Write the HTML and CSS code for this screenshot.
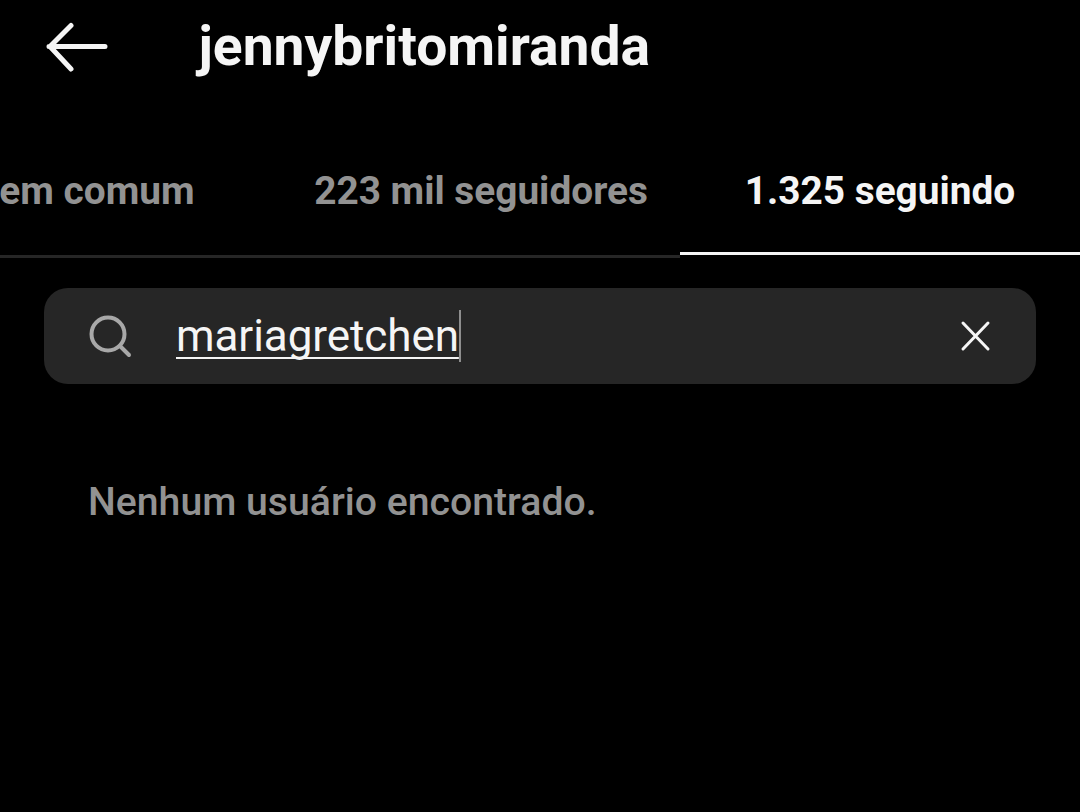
FILE: index.html
```html
<!DOCTYPE html>
<html lang="en">
<head>
    <meta charset="UTF-8">
    <meta name="viewport" content="width=device-width, initial-scale=1.0">
    <title>jennybritomiranda</title>
    <link rel="stylesheet" href="styles.css">
</head>
<body>
    <div class="page">
        <div class="header">
            <svg class="back-icon" width="62" height="50" viewBox="0 0 62 50" fill="none">
                <path d="M3 24.5H59M25 3.5L4 24.5L25 47" stroke="#f5f5f5" stroke-width="5" stroke-linecap="round" stroke-linejoin="round"/>
            </svg>
            <h1 class="username">jennybritomiranda</h1>
        </div>

        <div class="tabs">
            <a class="tab tab-common">em comum</a>
            <a class="tab tab-followers">223 mil seguidores</a>
            <a class="tab active">1.325 seguindo</a>
        </div>

        <div class="search">
            <svg class="search-icon" width="44" height="44" viewBox="0 0 44 44" fill="none">
                <circle cx="20" cy="20" r="16.5" stroke="#a8a8a8" stroke-width="4"/>
                <path d="M32 32L41 41" stroke="#a8a8a8" stroke-width="4" stroke-linecap="round"/>
            </svg>
            <div class="search-text"><span class="typed">mariagretchen</span><span class="caret"></span></div>
            <svg class="clear-icon" width="32" height="32" viewBox="0 0 32 32" fill="none">
                <path d="M4 3L29 29M29 3L4 29" stroke="#f5f5f5" stroke-width="3" stroke-linecap="round"/>
            </svg>
        </div>

        <p class="empty">Nenhum usuário encontrado.</p>
    </div>
</body>
</html>
```

FILE: styles.css
```css
* {
    box-sizing: border-box;
}
html, body {
    margin: 0;
    padding: 0;
    background-color: #000;
}
body {
    font-family: Roboto, "Liberation Sans", sans-serif;
    color: #f5f5f5;
}
.page {
    width: 1080px;
    height: 812px;
    overflow: hidden;
}
.header {
    display: flex;
    align-items: center;
    height: 94px;
    padding-left: 46px;
}
.back-icon {
    flex-shrink: 0;
}
.username {
    margin: -3px 0 0 90.5px;
    font-size: 55.2px;
    font-weight: 700;
    line-height: 94px;
    white-space: nowrap;
}
.tabs {
    display: flex;
    align-items: flex-start;
    height: 164px;
}
.tab {
    flex: none;
    display: flex;
    align-items: center;
    justify-content: center;
    width: 400px;
    height: 164px;
    padding-top: 32px;
    font-size: 38.8px;
    font-weight: 700;
    color: #929292;
    white-space: nowrap;
    border-bottom: 3px solid #262626;
}
.tab-common {
    margin-left: -120px;
    padding-left: 34px;
}
.tab-followers {
    padding-left: 2px;
}
.tab.active {
    height: 161px;
    padding-top: 35px;
    color: #f5f5f5;
    border-bottom-color: #f5f5f5;
}
.search {
    display: flex;
    align-items: center;
    height: 96px;
    margin: 30px 44px 0;
    padding: 0 46px 0 44px;
    background-color: #262626;
    border-radius: 24px;
}
.search-text {
    flex: 1;
    display: flex;
    align-items: center;
    margin-left: 44px;
    font-size: 44px;
    line-height: 52px;
}
.typed {
    letter-spacing: -0.08px;
    text-decoration: underline;
    text-decoration-thickness: 2px;
    text-decoration-skip-ink: none;
    text-underline-offset: 6px;
}
.caret {
    width: 2px;
    height: 52px;
    background-color: #8e8e8e;
}
.clear-icon {
    flex-shrink: 0;
    margin-right: -1px;
}
.empty {
    margin: 94px 0 0 88px;
    font-size: 39.2px;
    font-weight: 500;
    line-height: 48px;
    color: #929292;
}
```
